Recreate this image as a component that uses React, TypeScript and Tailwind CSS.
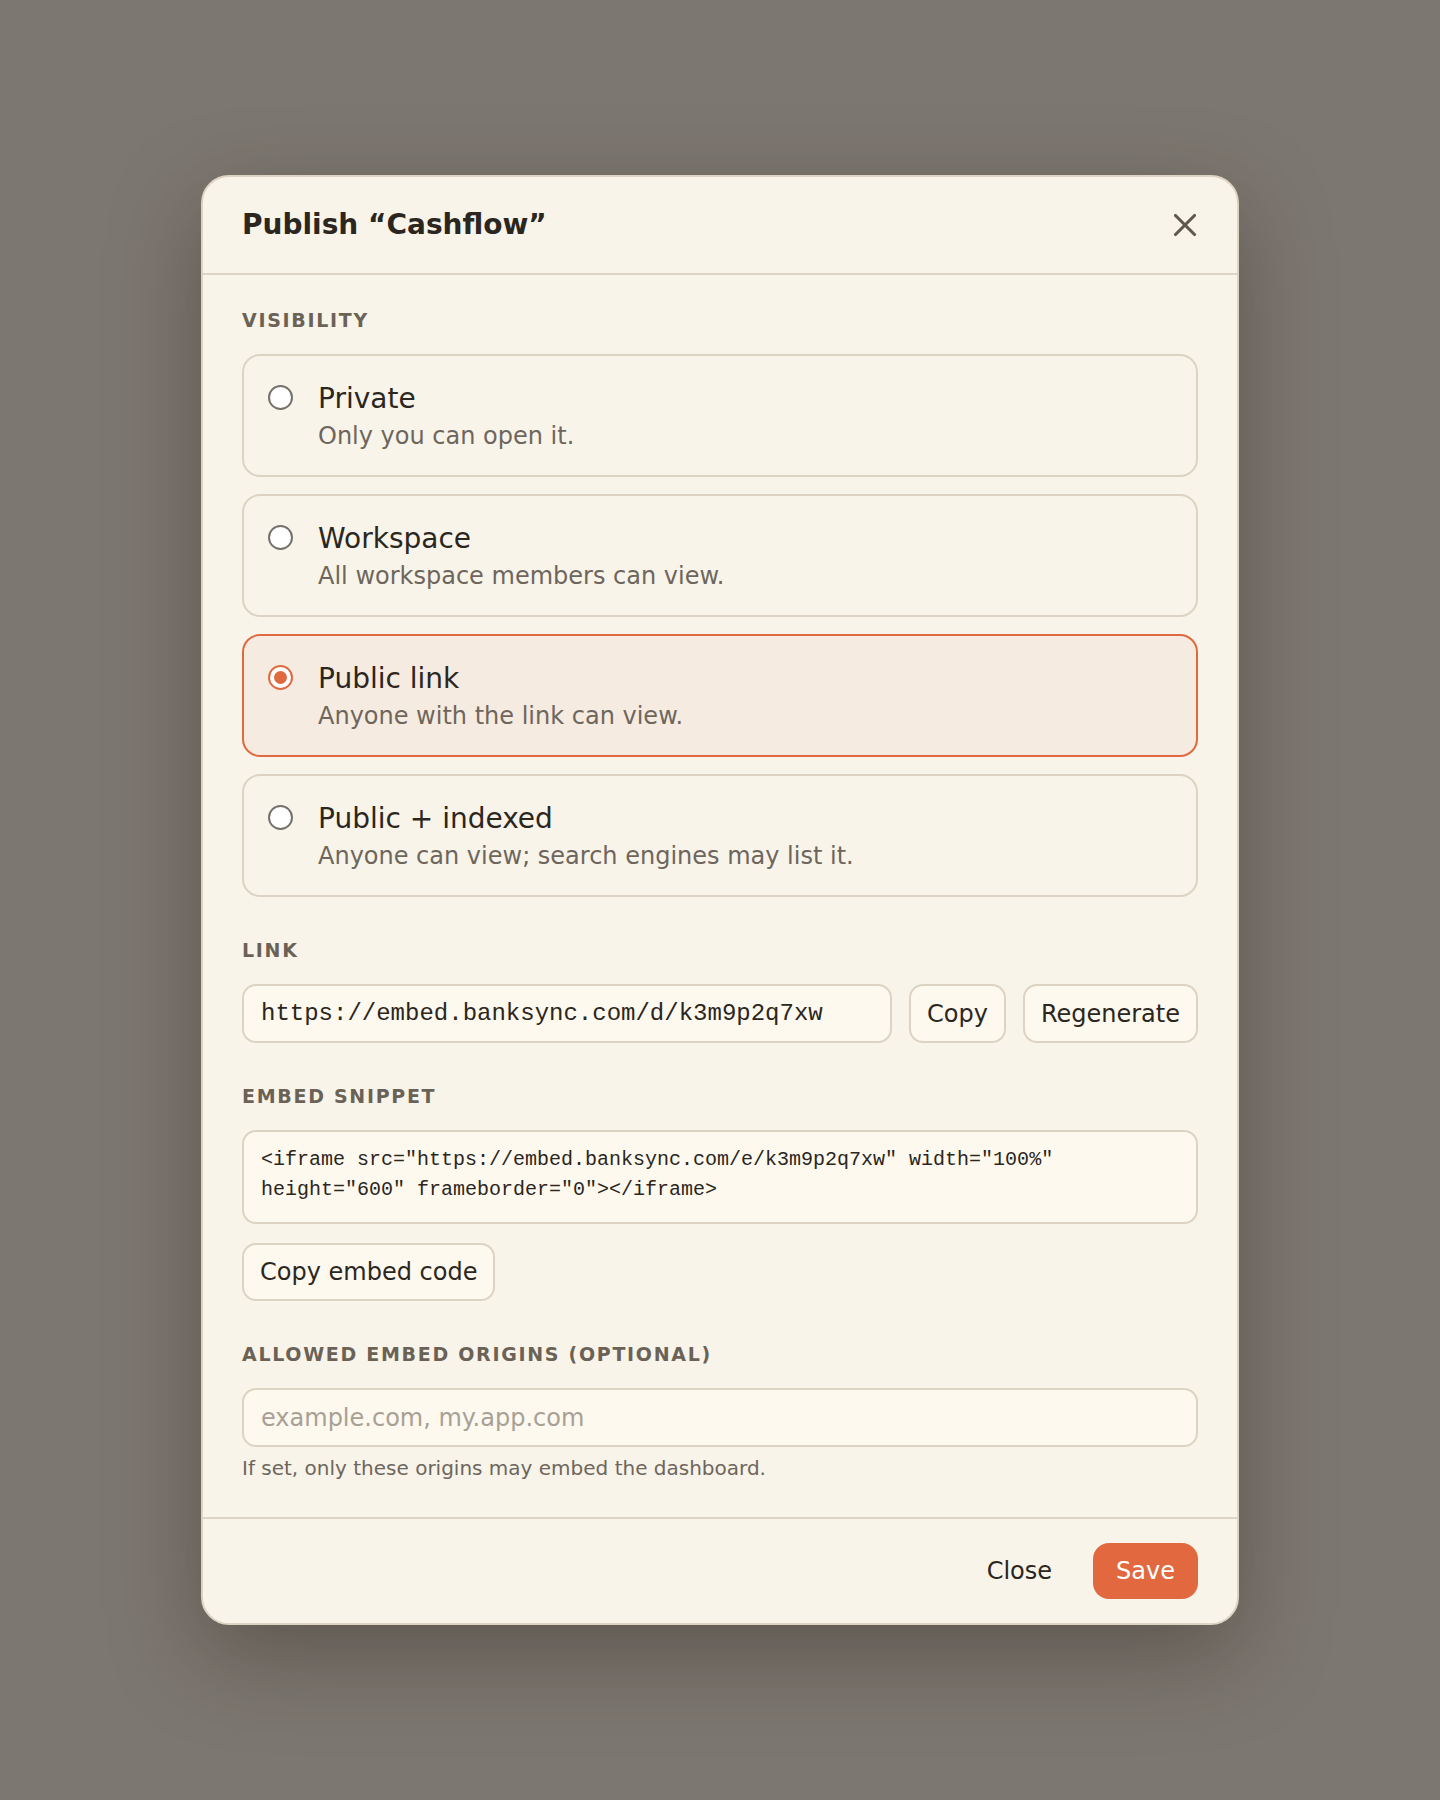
import { useState } from 'react';
import { X } from 'lucide-react';
import { clsx } from 'clsx';

const OPTIONS = [
    { id: 'private', title: 'Private', desc: 'Only you can open it.' },
    { id: 'workspace', title: 'Workspace', desc: 'All workspace members can view.' },
    { id: 'public', title: 'Public link', desc: 'Anyone with the link can view.' },
    { id: 'indexed', title: 'Public + indexed', desc: 'Anyone can view; search engines may list it.' },
];

const SANS = "font-['DejaVu_Sans','Noto_Sans',sans-serif]";
const MONO = "font-['Liberation_Mono','DejaVu_Sans_Mono',monospace]";

function Label({ children }: { children: React.ReactNode }) {
    return (
        <div className="text-[19px] leading-[23px] font-bold tracking-[1.7px] uppercase text-[#6b6256] mb-[22px]">
            {children}
        </div>
    );
}

function Radio({ checked }: { checked: boolean }) {
    return checked ? (
        <div className="mt-[3px] w-[25px] h-[25px] shrink-0 rounded-full border-[2.5px] border-[#e06a40] bg-white flex items-center justify-center">
            <div className="w-[13px] h-[13px] rounded-full bg-[#e06a40]" />
        </div>
    ) : (
        <div className="mt-[3px] w-[25px] h-[25px] shrink-0 rounded-full border-2 border-[#76716b] bg-white" />
    );
}

export default function App() {
    const [visibility, setVisibility] = useState('public');

    return (
        <div className={clsx(SANS, 'min-h-[1800px] w-full bg-[#7c7770] flex items-center justify-center')}>
            <div className="w-[1038px] bg-[#f8f4ea] border-2 border-[#ddd3c3] rounded-[28px] shadow-[0_30px_90px_rgba(40,30,20,0.35)] overflow-hidden">
                {/* Header */}
                <div className="h-[98px] px-[39px] flex items-center justify-between border-b-2 border-[#ddd4c4]">
                    <h2 className="text-[28px] font-bold text-[#2b2620]">Publish “Cashflow”</h2>
                    <button type="button" className="text-[#5f5850] -mr-[6px]">
                        <X className="w-[38px] h-[38px]" strokeWidth={2} />
                    </button>
                </div>

                {/* Body */}
                <div className="px-[39px] pt-[34px] pb-[37px] flex flex-col gap-[42px]">
                    <section>
                        <Label>Visibility</Label>
                        <div className="flex flex-col gap-[17px]">
                            {OPTIONS.map((o) => {
                                const selected = visibility === o.id;
                                return (
                                    <button
                                        key={o.id}
                                        type="button"
                                        onClick={() => setVisibility(o.id)}
                                        className={clsx(
                                            'flex items-start gap-[25px] text-left rounded-[18px] border-2 pl-[24px] pr-[24px] pt-[26px] pb-[23px]',
                                            selected ? 'bg-[#f6ebe0] border-[#e06a40]' : 'bg-[#f8f4ea] border-[#ddd3c2]'
                                        )}
                                    >
                                        <Radio checked={selected} />
                                        <div>
                                            <div className="text-[28px] leading-[33px] text-[#2b2620]">{o.title}</div>
                                            <div className="mt-[6px] text-[24px] leading-[31px] text-[#6e665c]">{o.desc}</div>
                                        </div>
                                    </button>
                                );
                            })}
                        </div>
                    </section>

                    <section>
                        <Label>Link</Label>
                        <div className="flex gap-[17px]">
                            <div className={clsx(MONO, 'flex-1 h-[59px] flex items-center pl-[17px] rounded-[14px] border-2 border-[#ddd3c2] bg-[#fdf9ef] text-[24px] text-[#2b2620]')}>
                                https://embed.banksync.com/d/k3m9p2q7xw
                            </div>
                            <button type="button" className="h-[59px] px-[16px] rounded-[14px] border-2 border-[#ddd3c2] bg-[#fdf9ef] text-[24px] text-[#2b2620]">
                                Copy
                            </button>
                            <button type="button" className="h-[59px] px-[16px] rounded-[14px] border-2 border-[#ddd3c2] bg-[#fdf9ef] text-[24px] text-[#2b2620]">
                                Regenerate
                            </button>
                        </div>
                    </section>

                    <section>
                        <Label>Embed snippet</Label>
                        <div className={clsx(MONO, 'h-[94px] pl-[17px] pt-[13px] rounded-[14px] border-2 border-[#ddd3c2] bg-[#fdf9ef] text-[20px] leading-[30px] text-[#2b2620]')}>
                            {'<iframe src="https://embed.banksync.com/e/k3m9p2q7xw" width="100%"'}
                            <br />
                            {'height="600" frameborder="0"></iframe>'}
                        </div>
                        <button type="button" className="mt-[19px] h-[58px] px-[16px] rounded-[14px] border-2 border-[#ddd3c2] bg-[#fdf9ef] text-[24px] text-[#2b2620]">
                            Copy embed code
                        </button>
                    </section>

                    <section>
                        <Label>Allowed embed origins (optional)</Label>
                        <input
                            type="text"
                            placeholder="example.com, my.app.com"
                            className="w-full h-[59px] pl-[17px] rounded-[14px] border-2 border-[#ddd3c2] bg-[#fdf9ef] text-[24px] text-[#2b2620] placeholder:text-[#a8a095] outline-none"
                        />
                        <p className="mt-[9px] text-[20px] leading-[24px] text-[#6e665c]">
                            If set, only these origins may embed the dashboard.
                        </p>
                    </section>
                </div>

                {/* Footer */}
                <div className="border-t-2 border-[#ddd4c4] px-[39px] py-[24px] flex items-center justify-end gap-[18px]">
                    <button type="button" className="h-[56px] px-[23px] text-[24px] text-[#2b2620]">
                        Close
                    </button>
                    <button type="button" className="h-[56px] px-[23px] rounded-[16px] bg-[#e2693f] text-[24px] text-white">
                        Save
                    </button>
                </div>
            </div>
        </div>
    );
}
